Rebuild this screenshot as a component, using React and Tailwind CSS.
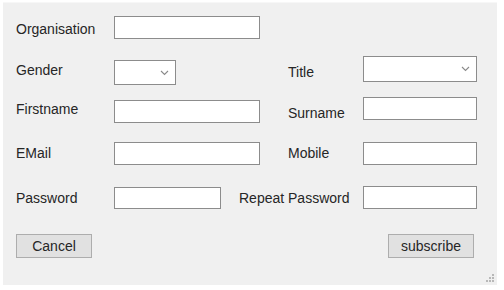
import React from 'react';

const Chevron = () => (
  <svg width="9" height="6" viewBox="0 0 9 6" className="absolute right-[6px] top-1/2 -translate-y-1/2">
    <path d="M1 1 L4.5 4.5 L8 1" fill="none" stroke="#8a8a8a" strokeWidth="1.1" />
  </svg>
);

const TextBox = ({ className = '' }) => (
  <div className={`bg-white border border-[#8c8c8c] shrink-0 ${className}`}></div>
);

const Combo = ({ className = '' }) => (
  <div className={`relative bg-white border border-[#8c8c8c] shrink-0 ${className}`}>
    <Chevron />
  </div>
);

const Label = ({ children, className = '' }) => (
  <div className={`leading-4 whitespace-nowrap shrink-0 ${className}`}>{children}</div>
);

const App = () => {
  return (
    <div className="w-[504px] h-[290px] bg-white pt-[2px] pl-[3px] font-['Liberation_Sans',Arial,sans-serif] text-[14px] text-[#262626]">
      <div className="relative w-[494px] h-[283px] bg-[#f0f0f0] border-t border-[#f7f7f7] pl-[13px] pr-[20px] pt-[13px]">
        {/* Organisation */}
        <div className="flex items-start h-[23px]">
          <Label className="w-[98px] mt-[5px]">Organisation</Label>
          <TextBox className="w-[146px] h-[23px]" />
        </div>

        {/* Gender / Title */}
        <div className="flex items-start mt-[17px]">
          <Label className="w-[98px] mt-[6px]">Gender</Label>
          <Combo className="w-[62px] h-[25px] mt-[4px]" />
          <div className="flex items-start ml-auto">
            <Label className="w-[75px] mt-[8px]">Title</Label>
            <Combo className="w-[114px] h-[26px]" />
          </div>
        </div>

        {/* Firstname / Surname */}
        <div className="flex items-start mt-[12px] h-[26px]">
          <Label className="w-[98px] mt-[4px]">Firstname</Label>
          <TextBox className="w-[146px] h-[23px] mt-[3px]" />
          <div className="flex items-start ml-auto">
            <Label className="w-[75px] mt-[8px]">Surname</Label>
            <TextBox className="w-[114px] h-[23px]" />
          </div>
        </div>

        {/* EMail / Mobile */}
        <div className="flex items-start mt-[19px] h-[23px]">
          <Label className="w-[98px] mt-[3px]">EMail</Label>
          <TextBox className="w-[146px] h-[23px]" />
          <div className="flex items-start ml-auto">
            <Label className="w-[75px] mt-[3px]">Mobile</Label>
            <TextBox className="w-[114px] h-[23px]" />
          </div>
        </div>

        {/* Password / Repeat Password */}
        <div className="flex items-start mt-[21px] h-[23px]">
          <Label className="w-[98px] mt-[4px]">Password</Label>
          <TextBox className="w-[107px] h-[22px] mt-[1px]" />
          <div className="flex items-start ml-auto">
            <Label className="w-[124px] mt-[4px]">Repeat Password</Label>
            <TextBox className="w-[114px] h-[23px]" />
          </div>
        </div>

        {/* Buttons */}
        <div className="flex items-start justify-between mt-[25px] pr-[3px]">
          <button className="w-[76px] h-[24px] bg-[#e1e1e1] border border-[#adadad] leading-4 text-[#262626]">
            Cancel
          </button>
          <button className="w-[86px] h-[24px] bg-[#e1e1e1] border border-[#adadad] leading-4 text-[#262626]">
            subscribe
          </button>
        </div>

        {/* resize grip */}
        <svg width="10" height="10" viewBox="0 0 10 10" className="absolute right-[2px] bottom-[2px]">
          <rect x="7" y="1" width="2" height="2" fill="#b8b8b8" />
          <rect x="4" y="4" width="2" height="2" fill="#b8b8b8" />
          <rect x="7" y="4" width="2" height="2" fill="#b8b8b8" />
          <rect x="1" y="7" width="2" height="2" fill="#b8b8b8" />
          <rect x="4" y="7" width="2" height="2" fill="#b8b8b8" />
          <rect x="7" y="7" width="2" height="2" fill="#b8b8b8" />
        </svg>
      </div>
    </div>
  );
};

export default App;
